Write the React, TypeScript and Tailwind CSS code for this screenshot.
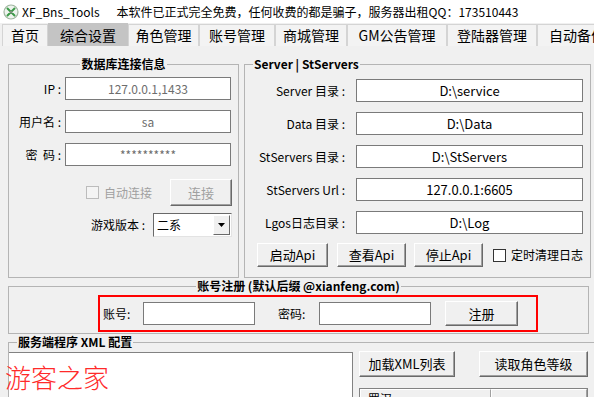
import React from 'react';

const tabs = [
  { label: '首页', w: 'w-[46px]' },
  { label: '综合设置', w: 'w-[80px]', active: true },
  { label: '角色管理', w: 'w-[71px]' },
  { label: '账号管理', w: 'w-[76px]' },
  { label: '商城管理', w: 'w-[72px]' },
  { label: 'GM公告管理', w: 'w-[100px]' },
  { label: '登陆器管理', w: 'w-[90px]' },
  { label: '自动备份', w: 'w-[80px]' },
];

const dbRows = [
  { label: 'IP :', value: '127.0.0.1,1433' },
  { label: '用户名 :', value: 'sa' },
  { label: '密\u00a0\u00a0码 :', value: '**********' },
];

const serverRows = [
  { label: 'Server 目录 :', value: 'D:\\service' },
  { label: 'Data 目录 :', value: 'D:\\Data' },
  { label: 'StServers 目录 :', value: 'D:\\StServers' },
  { label: 'StServers Url :', value: '127.0.0.1:6605' },
  { label: 'Lgos日志目录 :', value: 'D:\\Log' },
];

const Btn: React.FC<{ className?: string; disabled?: boolean; children: React.ReactNode }> = ({ className, disabled, children }) => (
  <button
    className={`flex items-center justify-center bg-[#f0f0f0] border border-t-white border-l-white border-r-[#696969] border-b-[#696969] shadow-[inset_-1px_-1px_0_#a0a0a0] text-[13px] ${disabled ? 'text-[#a0a0a0]' : 'text-black'} ${className}`}
  >
    {children}
  </button>
);

const Group: React.FC<{ title: string; center?: boolean; className?: string; children: React.ReactNode }> = ({ title, center, className, children }) => (
  <fieldset className={`border border-[#b4b4b4] m-0 p-0 min-w-0 ${className}`}>
    <legend className={`${center ? 'mx-auto' : 'ml-[8px]'} px-[1px] text-[12px] leading-[16px] font-bold`}>{title}</legend>
    {children}
  </fieldset>
);

const Check: React.FC<{ disabled?: boolean }> = ({ disabled }) => (
  <div className={`w-[13px] h-[13px] border ${disabled ? 'border-[#bcbcbc] bg-[#f4f4f4]' : 'border-[#333333] bg-white'}`} />
);

export default function App() {
  return (
    <div className="relative w-[594px] h-[397px] overflow-hidden bg-[#f0f0f0] text-black font-['Noto_Sans_CJK_SC',sans-serif]">
      {/* title bar */}
      <div className="h-[23px] bg-white flex items-center whitespace-nowrap">
        <svg width="16" height="16" viewBox="0 0 16 16" className="ml-[3px] shrink-0">
          <circle cx="8" cy="8" r="7" fill="#eef4ee" stroke="#9fb59f" strokeWidth="1.2" />
          <path d="M4.5 4.5 L11.5 11.5 M11.5 4.5 L4.5 11.5" stroke="#3c9a48" strokeWidth="2" strokeLinecap="round" />
          <circle cx="8" cy="8" r="1.5" fill="#7a8f7a" />
        </svg>
        <span className="ml-[3px] text-[12px]">XF_Bns_Tools</span>
        <span className="ml-[17px] text-[12px]">本软件已正式完全免费，任何收费的都是骗子，服务器出租QQ：173510443</span>
      </div>

      {/* tabs */}
      <div className="h-[23px] flex items-end pl-[2px] whitespace-nowrap">
        {tabs.map(t => (
          <div
            key={t.label}
            className={`${t.w} shrink-0 flex items-center justify-center text-[14px] border border-b-0 ${t.active ? 'h-[23px] bg-[#c4c4c4] border-[#c4c4c4]' : 'h-[22px] bg-[#f3f3f3] border-[#d4d4d4]'}`}
          >
            {t.label}
          </div>
        ))}
      </div>

      {/* content */}
      <div className="pt-[10px] pl-[8px]">
        <div className="flex gap-[5px]">
          <Group title="数据库连接信息" center className="w-[231px] h-[222px]">
            <div className="mt-[5px] flex flex-col gap-[10px]">
              {dbRows.map(r => (
                <div key={r.label} className="flex items-center h-[23px]">
                  <div className="w-[52px] text-right text-[12px]">{r.label}</div>
                  <div className="ml-[4px] w-[166px] h-[23px] bg-white border border-[#7a7a7a] flex items-center justify-center text-[12px] text-[#6d6d6d]">
                    {r.value}
                  </div>
                </div>
              ))}
            </div>
            <div className="mt-[13px] h-[27px] flex items-center justify-end pr-[6px]">
              <Check disabled />
              <span className="ml-[5px] text-[12px] text-[#a0a0a0]">自动连接</span>
              <Btn disabled className="ml-[18px] w-[62px] h-[27px]">连接</Btn>
            </div>
            <div className="mt-[7px] h-[24px] flex items-center justify-end pr-[6px]">
              <span className="text-[12px]">游戏版本 :</span>
              <div className="ml-[8px] w-[79px] h-[24px] bg-white border border-t-[#696969] border-l-[#696969] border-r-[#e3e3e3] border-b-[#e3e3e3] flex items-center">
                <span className="flex-1 pl-[3px] text-[12px]">二系</span>
                <div className="w-[17px] h-[20px] mr-[1px] bg-[#f0f0f0] border border-t-white border-l-white border-r-[#696969] border-b-[#696969] flex items-center justify-center">
                  <svg width="7" height="4" viewBox="0 0 7 4"><path d="M0 0 H7 L3.5 4 Z" fill="#000" /></svg>
                </div>
              </div>
            </div>
          </Group>

          <Group title="Server | StServers" className="w-[347px] h-[222px]">
            <div className="mt-[7px] flex flex-col gap-[10px]">
              {serverRows.map(r => (
                <div key={r.label} className="flex items-center h-[23px]">
                  <div className="w-[100px] text-right text-[12px] whitespace-nowrap">{r.label}</div>
                  <div className="ml-[11px] w-[227px] h-[23px] bg-white border border-[#7a7a7a] flex items-center justify-center text-[13px]">
                    {r.value}
                  </div>
                </div>
              ))}
            </div>
            <div className="mt-[9px] h-[24px] flex items-center pl-[12px]">
              <Btn className="w-[71px] h-[24px]">启动Api</Btn>
              <Btn className="ml-[9px] w-[69px] h-[24px]">查看Api</Btn>
              <Btn className="ml-[8px] w-[69px] h-[24px]">停止Api</Btn>
              <div className="ml-[10px]"><Check /></div>
              <span className="ml-[5px] text-[12px] whitespace-nowrap">定时清理日志</span>
            </div>
          </Group>
        </div>

        <Group title="账号注册 (默认后缀 @xianfeng.com)" center className="w-[581px] pb-[1px]">
          <div className="ml-[89px] mt-[1px] w-[440px] h-[37px] border-2 border-[#ff0000] flex items-center">
            <span className="w-[43px] pl-[3px] text-[12px]">账号:</span>
            <div className="w-[112px] h-[23px] bg-white border border-[#7a7a7a]" />
            <span className="ml-[23px] w-[41px] text-[12px]">密码:</span>
            <div className="w-[112px] h-[23px] bg-white border border-[#7a7a7a]" />
            <Btn className="ml-[14px] w-[73px] h-[25px]">注册</Btn>
          </div>
        </Group>

        <Group title="服务端程序 XML 配置" className="w-[592px] h-[80px]">
          <div className="flex">
            <div className="mt-[2px] w-[344px] h-[60px] bg-white border-t border-r border-[#828282]" />
            <div className="ml-[6px] mt-[1px]">
              <div className="flex">
                <Btn className="w-[96px] h-[26px]">加载XML列表</Btn>
                <Btn className="ml-[24px] w-[109px] h-[26px]">读取角色等级</Btn>
              </div>
              <div className="mt-[11px] w-[229px] h-[22px] flex border border-[#828282] bg-white">
                <div className="w-[131px] h-full border border-t-white border-l-white border-r-[#a0a0a0] bg-[#f0f0f0] pl-[7px] text-[12px] leading-[18px] overflow-hidden">罗汉</div>
                <div className="flex-1 h-full border border-t-white border-l-white border-r-[#a0a0a0] bg-[#f0f0f0]" />
              </div>
            </div>
          </div>
        </Group>
      </div>

      {/* watermark */}
      <div className="absolute left-[5px] top-[361px] text-[26px] leading-[32px] font-light text-[#ff2a2a] whitespace-nowrap">游客之家</div>
    </div>
  );
}
